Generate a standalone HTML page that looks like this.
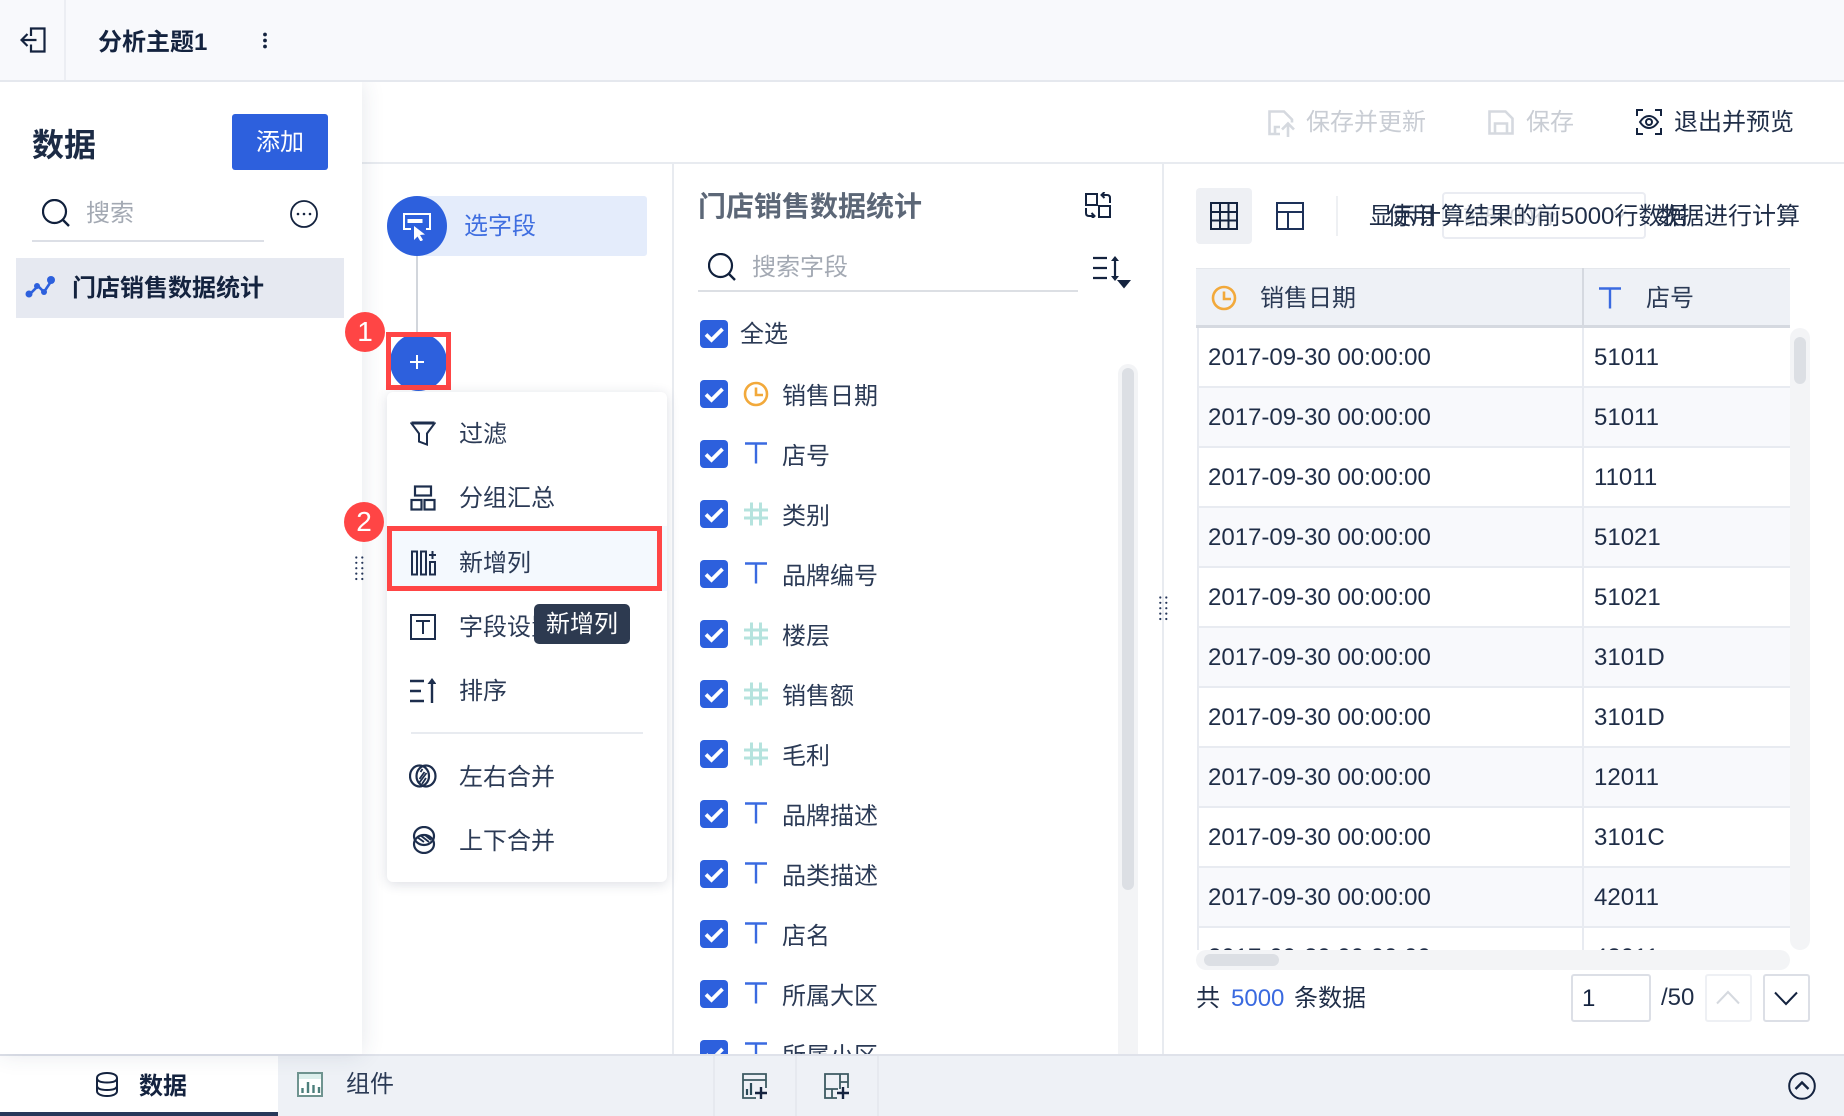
<!DOCTYPE html>
<html lang="zh"><head><meta charset="utf-8"><title>分析主题1</title>
<style>
html,body{margin:0;padding:0;width:1844px;height:1116px;overflow:hidden;background:#fff}
body{position:relative;font-family:"Liberation Sans","Noto Sans CJK SC",sans-serif;color:#1f2d47;font-size:24px}
div,span,svg{position:absolute;display:block}
.t{white-space:nowrap;line-height:32px;height:32px;font-size:24px;margin-top:1px}
.b{font-weight:700}
.g{color:#a3a9b3}
.m{color:#2b3a55}
.cb{left:700px;width:28px;height:28px}
.fi{left:742px;width:28px;height:28px}
.fl{left:782px;color:#2b3a55;margin-top:2px}
.row{left:1px;width:593px;height:58px;border-bottom:2px solid #e8ebf1;border-left:2px solid #e8ebf1;box-sizing:content-box}
.alt{background:#f8f9fc}
.c1{left:1208px;color:#1f2d47}
.c2{left:1594px;color:#1f2d47}
.mi{left:410px;width:26px;height:26px}
.ml{left:459px;color:#2b3a55;margin-top:2px}
.p2{margin-top:2px}
</style></head><body>
<svg width="0" height="0" style="position:absolute"><defs>
<symbol id="ck" viewBox="0 0 28 28"><rect width="28" height="28" rx="4" fill="#2d60dd"/><path d="M6 14.500l5.500 5.500L22.500 9" fill="none" stroke="#fff" stroke-width="3.800"/></symbol>
<symbol id="T" viewBox="0 0 28 28"><path d="M3 4.500h22M14 4.500v20" fill="none" stroke="#3a6ae0" stroke-width="2.400"/></symbol>
<symbol id="H" viewBox="0 0 28 28"><path d="M2 10h24M2 18h24M9.500 2.500v23M18.500 2.500v23" fill="none" stroke="#b5e3de" stroke-width="3"/></symbol>
<symbol id="C" viewBox="0 0 28 28"><circle cx="14" cy="14" r="11" fill="none" stroke="#f2a93b" stroke-width="2.600"/><path d="M14 7.500V15h7" fill="none" stroke="#f2a93b" stroke-width="2.600"/></symbol>
<symbol id="S" viewBox="0 0 28 28"><circle cx="12.500" cy="12.500" r="11.500" fill="none" stroke="#10203c" stroke-width="2.200"/><path d="M21 21l6 6" stroke="#10203c" stroke-width="2.400"/></symbol>
<symbol id="D" viewBox="0 0 9 25"><g fill="#26375a"><circle cx="1.300" cy="1.500" r="1.100"/><circle cx="7.300" cy="1.500" r="1.100"/><circle cx="1.300" cy="6.800" r="1.100"/><circle cx="7.300" cy="6.800" r="1.100"/><circle cx="1.300" cy="12.200" r="1.100"/><circle cx="7.300" cy="12.200" r="1.100"/><circle cx="1.300" cy="17.600" r="1.100"/><circle cx="7.300" cy="17.600" r="1.100"/><circle cx="1.300" cy="23" r="1.100"/><circle cx="7.300" cy="23" r="1.100"/></g></symbol>
</defs></svg>

<!-- top bar -->
<div style="left:0;top:0;width:1844px;height:80px;background:#f8f9fc"></div>
<div style="left:0;top:80px;width:1844px;height:2px;background:#e5e8ee"></div>
<div style="left:64px;top:0;width:2px;height:80px;background:#eceef3"></div>
<svg style="left:20px;top:27px" width="26" height="26" viewBox="0 0 26 26" fill="none" stroke="#14233f" stroke-width="2.200"><path d="M11 9V1.500h13.500v23H11v-7"/><path d="M1.500 13h15M7.500 7l-6 6 6 6"/></svg>
<div class="t b p2" style="left:98px;top:25px;color:#14233f">分析主题1</div>
<svg style="left:262px;top:32px" width="6" height="17" viewBox="0 0 6 17" fill="#14233f"><circle cx="3" cy="2.500" r="1.900"/><circle cx="3" cy="8.500" r="1.900"/><circle cx="3" cy="14.500" r="1.900"/></svg>

<!-- toolbar -->
<div style="left:362px;top:162px;width:1482px;height:2px;background:#e8ebf0"></div>
<svg style="left:1268px;top:110px" width="28" height="27" viewBox="0 0 28 27" fill="none" stroke="#d5d9df" stroke-width="2.600"><path d="M12 24H1.500V1.500H16l8 8v3"/><path d="M20 27V14M14 19.500l6-6 6 6M7 24v-7h5"/></svg>
<div class="t" style="left:1306px;top:106px;color:#c9cdd4">保存并更新</div>
<svg style="left:1488px;top:110px" width="26" height="25" viewBox="0 0 26 25" fill="none" stroke="#d5d9df" stroke-width="2.600"><path d="M1.500 23.500V1.500h16l7 7v15zM7 23.500v-10h12v10"/></svg>
<div class="t" style="left:1526px;top:106px;color:#c9cdd4">保存</div>
<svg style="left:1636px;top:109px" width="26" height="26" viewBox="0 0 26 26" fill="none" stroke="#14233f" stroke-width="2"><path d="M1 7V1h6M19 1h6v6M25 19v6h-6M7 25H1v-6"/><path d="M4 13c2.500-4 5.500-6 9-6s6.500 2 9 6c-2.500 4-5.500 6-9 6s-6.500-2-9-6z"/><circle cx="13" cy="13" r="3"/></svg>
<div class="t" style="left:1674px;top:106px;color:#1f2d47">退出并预览</div>

<!-- node column -->
<div style="left:416px;top:256px;width:2px;height:80px;background:#d2d6dc"></div>
<div style="left:417px;top:196px;width:230px;height:60px;background:#e4ecfb;border-radius:0 3px 3px 0"></div>
<div style="left:387px;top:196px;width:60px;height:60px;border-radius:50%;background:#2d60dd"></div>
<svg style="left:403px;top:213px" width="28" height="28" viewBox="0 0 28 28" fill="none"><path d="M8 16H1V1h26v15h-4" stroke="#fff" stroke-width="2"/><rect x="4.500" y="6" width="15" height="4" fill="#fff"/><path d="M11 13v14l3.500-3.500 3 5 2.500-1.500-3-5 5-.5z" fill="#fff"/></svg>
<div class="t" style="left:464px;top:210px;color:#3f6ee0">选字段</div>

<div style="left:390px;top:333px;width:57px;height:58px;border-radius:50%;background:#2d60dd"></div>
<div style="left:386px;top:332px;width:55px;height:48px;border:5px solid #ff4545"></div>
<svg style="left:408px;top:353px" width="18" height="18" viewBox="0 0 18 18"><path d="M9 2v14M2 9h14" stroke="#fff" stroke-width="2"/></svg>

<!-- vertical separators -->
<div style="left:672px;top:164px;width:2px;height:890px;background:#e8ebf0"></div>
<div style="left:1162px;top:164px;width:2px;height:890px;background:#e8ebf0"></div>
<svg style="left:1159px;top:596px" width="9" height="25"><use href="#D"/></svg>

<!-- field panel -->
<div class="t b" style="left:698px;top:190px;font-size:28px;color:#5c6777">门店销售数据统计</div>
<svg style="left:1085px;top:192px" width="26" height="26" viewBox="0 0 26 26" fill="none" stroke="#14233f" stroke-width="2"><rect x="1" y="2" width="11" height="11"/><rect x="14" y="14" width="11" height="11"/><path d="M25 11V6c0-2-1-3-3-3h-5M19.500 0l-3 3 3 3M1 16v5c0 2 1 3 3 3h5M6.500 21l3 3-3 3"/></svg>
<svg style="left:708px;top:253px" width="28" height="28"><use href="#S"/></svg>
<div class="t g" style="left:752px;top:251px">搜索字段</div>
<div style="left:698px;top:290px;width:380px;height:2px;background:#dcdfe4"></div>
<svg style="left:1093px;top:255px" width="38" height="34" viewBox="0 0 38 34" fill="none" stroke="#14233f" stroke-width="2.200"><path d="M0 3h14M0 13h14M0 23h14M22 4v18"/><path d="M22 1l-4 5h8zM22 26l-4-5h8z" fill="#14233f" stroke="none"/><path d="M24 25h14l-7 8.500z" fill="#14233f" stroke="none"/></svg>

<svg class="cb" style="top:320px"><use href="#ck"/></svg>
<div class="t fl" style="left:740px;top:318px;margin-top:1px">全选</div>

<svg class="cb" style="top:380px"><use href="#ck"/></svg><svg class="fi" style="top:380px"><use href="#C"/></svg><div class="t fl" style="top:379px">销售日期</div>
<svg class="cb" style="top:440px"><use href="#ck"/></svg><svg class="fi" style="top:439px"><use href="#T"/></svg><div class="t fl" style="top:439px">店号</div>
<svg class="cb" style="top:500px"><use href="#ck"/></svg><svg class="fi" style="top:500px"><use href="#H"/></svg><div class="t fl" style="top:499px">类别</div>
<svg class="cb" style="top:560px"><use href="#ck"/></svg><svg class="fi" style="top:559px"><use href="#T"/></svg><div class="t fl" style="top:559px">品牌编号</div>
<svg class="cb" style="top:620px"><use href="#ck"/></svg><svg class="fi" style="top:620px"><use href="#H"/></svg><div class="t fl" style="top:619px">楼层</div>
<svg class="cb" style="top:680px"><use href="#ck"/></svg><svg class="fi" style="top:680px"><use href="#H"/></svg><div class="t fl" style="top:679px">销售额</div>
<svg class="cb" style="top:740px"><use href="#ck"/></svg><svg class="fi" style="top:740px"><use href="#H"/></svg><div class="t fl" style="top:739px">毛利</div>
<svg class="cb" style="top:800px"><use href="#ck"/></svg><svg class="fi" style="top:799px"><use href="#T"/></svg><div class="t fl" style="top:799px">品牌描述</div>
<svg class="cb" style="top:860px"><use href="#ck"/></svg><svg class="fi" style="top:859px"><use href="#T"/></svg><div class="t fl" style="top:859px">品类描述</div>
<svg class="cb" style="top:920px"><use href="#ck"/></svg><svg class="fi" style="top:919px"><use href="#T"/></svg><div class="t fl" style="top:919px">店名</div>
<svg class="cb" style="top:980px"><use href="#ck"/></svg><svg class="fi" style="top:979px"><use href="#T"/></svg><div class="t fl" style="top:979px">所属大区</div>
<svg class="cb" style="top:1040px"><use href="#ck"/></svg><svg class="fi" style="top:1039px"><use href="#T"/></svg><div class="t fl" style="top:1039px">所属小区</div>

<div style="left:1118px;top:364px;width:20px;height:700px;background:#f3f4f6;border-radius:10px"></div>
<div style="left:1122px;top:368px;width:12px;height:522px;background:#dcdfe4;border-radius:6px"></div>

<!-- right panel top -->
<div style="left:1196px;top:188px;width:56px;height:56px;background:#eef0f4;border-radius:4px"></div>
<svg style="left:1210px;top:202px" width="28" height="28" viewBox="0 0 28 28" fill="none" stroke="#14233f" stroke-width="2"><rect x="1" y="1" width="26" height="26"/><path d="M1 10h26M1 18.500h26M10 1v26M18.500 1v26"/></svg>
<svg style="left:1276px;top:202px" width="28" height="28" viewBox="0 0 28 28" fill="none" stroke="#1d3159" stroke-width="2"><rect x="1" y="1" width="26" height="26"/><path d="M1 10h26M12 10v17"/></svg>
<div style="left:1336px;top:196px;width:2px;height:40px;background:#eef0f3"></div>

<div style="left:1442px;top:192px;width:200px;height:43px;border:2px solid #eaecf2;border-radius:4px"></div>
<div class="t" style="left:1463px;top:200px;color:#d3d6dc;font-size:22px">前5000行</div>
<svg style="left:1612px;top:209px" width="16" height="12" viewBox="0 0 16 12" fill="none" stroke="#d3d6dc" stroke-width="2"><path d="M2 2l6 7 6-7"/></svg>
<div class="t" style="left:1369px;top:200px;color:#1f2d47">显示计算结果的前5000行数据</div>
<div class="t" style="left:1387px;top:200px;color:#1f2d47">使用</div>
<div class="t" style="left:1656px;top:200px;color:#1f2d47">数据进行计算</div>

<!-- table -->
<div style="left:1196px;top:268px;width:594px;height:682px;overflow:hidden">
<div style="left:0;top:0;width:594px;height:56px;background:#eef1f6;border-bottom:3px solid #d5d9e0;border-top:1px solid #e4e7ec"></div>
<div class="row" style="top:60px"></div>
<div class="row alt" style="top:120px"></div>
<div class="row" style="top:180px"></div>
<div class="row alt" style="top:240px"></div>
<div class="row" style="top:300px"></div>
<div class="row alt" style="top:360px"></div>
<div class="row" style="top:420px"></div>
<div class="row alt" style="top:480px"></div>
<div class="row" style="top:540px"></div>
<div class="row alt" style="top:600px"></div>
<div class="row" style="top:660px"></div>
<div style="left:386px;top:0;width:2px;height:59px;background:#d5d9e0"></div>
<div style="left:386px;top:60px;width:2px;height:622px;background:#e8ebf1"></div>
</div>
<svg style="left:1210px;top:284px" width="28" height="28"><use href="#C"/></svg>
<div class="t" style="left:1260px;top:282px;color:#2b3a55">销售日期</div>
<svg style="left:1596px;top:284px" width="28" height="28"><use href="#T"/></svg>
<div class="t" style="left:1646px;top:282px;color:#2b3a55">店号</div>

<div class="t c1" style="top:341px">2017-09-30 00:00:00</div><div class="t c2" style="top:341px">51011</div>
<div class="t c1" style="top:401px">2017-09-30 00:00:00</div><div class="t c2" style="top:401px">51011</div>
<div class="t c1" style="top:461px">2017-09-30 00:00:00</div><div class="t c2" style="top:461px">11011</div>
<div class="t c1" style="top:521px">2017-09-30 00:00:00</div><div class="t c2" style="top:521px">51021</div>
<div class="t c1" style="top:581px">2017-09-30 00:00:00</div><div class="t c2" style="top:581px">51021</div>
<div class="t c1" style="top:641px">2017-09-30 00:00:00</div><div class="t c2" style="top:641px">3101D</div>
<div class="t c1" style="top:701px">2017-09-30 00:00:00</div><div class="t c2" style="top:701px">3101D</div>
<div class="t c1" style="top:761px">2017-09-30 00:00:00</div><div class="t c2" style="top:761px">12011</div>
<div class="t c1" style="top:821px">2017-09-30 00:00:00</div><div class="t c2" style="top:821px">3101C</div>
<div class="t c1" style="top:881px">2017-09-30 00:00:00</div><div class="t c2" style="top:881px">42011</div>
<div class="t c1" style="top:941px">2017-09-30 00:00:00</div><div class="t c2" style="top:941px">42011</div>

<!-- cover below clip -->
<div style="left:1190px;top:950px;width:610px;height:30px;background:#fff"></div>
<div style="left:1196px;top:950px;width:594px;height:20px;background:#f3f4f6;border-radius:10px"></div>
<div style="left:1204px;top:954px;width:75px;height:12px;background:#dcdfe4;border-radius:6px"></div>
<div style="left:1790px;top:328px;width:20px;height:622px;background:#f3f4f6;border-radius:10px"></div>
<div style="left:1794px;top:337px;width:12px;height:47px;background:#dcdfe4;border-radius:6px"></div>

<!-- pager -->
<div class="t p2" style="left:1196px;top:981px">共</div>
<div class="t p2" style="left:1231px;top:981px;color:#3a6ae0">5000</div>
<div class="t p2" style="left:1294px;top:981px">条数据</div>
<div style="left:1571px;top:974px;width:76px;height:44px;border:2px solid #dcdfe6;border-radius:3px"></div>
<div class="t" style="left:1582px;top:982px;color:#14233f">1</div>
<div class="t" style="left:1661px;top:981px">/50</div>
<div style="left:1705px;top:974px;width:43px;height:44px;border:2px solid #eef0f4;border-radius:3px"></div>
<svg style="left:1716px;top:990px" width="24" height="15" viewBox="0 0 24 15" fill="none" stroke="#d5d9df" stroke-width="2"><path d="M1 13.500L12 2l11 11.500"/></svg>
<div style="left:1763px;top:974px;width:43px;height:44px;border:2px solid #dcdfe6;border-radius:3px"></div>
<svg style="left:1774px;top:991px" width="24" height="15" viewBox="0 0 24 15" fill="none" stroke="#14233f" stroke-width="2"><path d="M1 1.500L12 13 23 1.500"/></svg>

<!-- menu -->
<div style="left:387px;top:392px;width:280px;height:490px;background:#fff;border-radius:6px;box-shadow:0 2px 12px rgba(30,45,80,.16)"></div>
<svg class="mi" style="top:420px" viewBox="0 0 26 26" fill="none" stroke="#1d2e4d" stroke-width="2"><path d="M1.500 3.500h23l-7.500 10v11l-8-3v-8z"/><path d="M1.500 3h23" stroke-width="3"/></svg>
<div class="t ml" style="top:417px">过滤</div>
<svg class="mi" style="top:485px" viewBox="0 0 26 26" fill="none" stroke="#1d2e4d" stroke-width="2.200"><rect x="5" y="1.500" width="16" height="9"/><rect x="1.500" y="15" width="10" height="9.500"/><rect x="14.500" y="15" width="10" height="9.500"/></svg>
<div class="t ml" style="top:481px">分组汇总</div>
<div style="left:387px;top:526px;width:280px;height:65px;background:#f4f9fe"></div>
<div style="left:387px;top:526px;width:265px;height:55px;border:5px solid #ff4545"></div>
<svg class="mi" style="top:550px" viewBox="0 0 26 26" fill="none" stroke="#1d2e4d" stroke-width="2"><rect x="2" y="1.500" width="5" height="23"/><rect x="11" y="1.500" width="5" height="23"/><rect x="20" y="12" width="5" height="12.500"/><path d="M22.500 1v8M19 5h7"/></svg>
<div class="t ml" style="top:546px">新增列</div>
<svg class="mi" style="top:614px" viewBox="0 0 26 26" fill="none" stroke="#1d2e4d" stroke-width="2"><rect x="1" y="1" width="24" height="24"/><path d="M6 7h14M13 7v13"/></svg>
<div class="t ml" style="top:610px">字段设置</div>
<div style="left:534px;top:604px;width:96px;height:40px;background:#2d3a50;border-radius:5px"></div>
<div class="t" style="left:546px;top:608px;color:#fff">新增列</div>
<svg class="mi" style="top:678px" viewBox="0 0 26 26" fill="none" stroke="#1d2e4d" stroke-width="2.400"><path d="M0 3h14M0 13h11M0 23h14M22 4v21"/><path d="M22 0l-4.500 6h9z" fill="#1d2e4d" stroke="none"/></svg>
<div class="t ml" style="top:674px">排序</div>
<div style="left:411px;top:732px;width:232px;height:2px;background:#e8ebf0"></div>
<svg style="left:409px;top:764px" width="28" height="24" viewBox="0 0 28 24" fill="none" stroke="#1d2e4d" stroke-width="2.200"><ellipse cx="10.500" cy="12" rx="9.500" ry="10.500"/><ellipse cx="17" cy="12" rx="9.500" ry="10.500"/><path d="M10.500 15l5-7M10 19l7.500-10M13 20l4-6M11.500 8l2-3" stroke-width="1.800"/></svg>
<div class="t ml" style="top:760px">左右合并</div>
<svg style="left:412px;top:826px" width="24" height="28" viewBox="0 0 24 28" fill="none" stroke="#1d2e4d" stroke-width="2.200"><ellipse cx="12" cy="10" rx="10" ry="9"/><ellipse cx="12" cy="18" rx="10" ry="9"/><path d="M5 11l7 5M8 9l9 7M13 9l6 5" stroke-width="1.800"/></svg>
<div class="t ml" style="top:824px">上下合并</div>

<!-- bottom bar -->
<div style="left:0;top:1054px;width:1844px;height:62px;background:#eef1f6;border-top:2px solid #dfe2ea;box-sizing:border-box"></div>
<div style="left:0;top:1056px;width:278px;height:60px;background:#fff"></div>
<div style="left:0;top:1112px;width:278px;height:4px;background:#27385a"></div>
<svg style="left:95px;top:1072px" width="24" height="25" viewBox="0 0 24 25" fill="none" stroke="#14233f" stroke-width="2"><path d="M2 6c0-3 4-5 10-5s10 2 10 5v13c0 3-4 5-10 5s-10-2-10-5z"/><path d="M2 6c0 3 4 4.500 10 4.500S22 9 22 6M2 13.500c0 3 4 4.500 10 4.500s10-1.500 10-4.500"/></svg>
<div class="t b p2" style="left:139px;top:1069px;color:#14233f">数据</div>
<svg style="left:297px;top:1072px" width="26" height="25" viewBox="0 0 26 25"><rect x="1" y="1" width="24" height="23" fill="#fff" stroke="#6f9490" stroke-width="2"/><rect x="2" y="2" width="22" height="5" fill="#dcefec"/><path d="M5.500 21v-5M11 21V10M16.500 21v-8M22 21v-6" stroke="#4d7f7c" stroke-width="2.400"/></svg>
<div class="t m p2" style="left:346px;top:1067px">组件</div>
<div style="left:713px;top:1056px;width:2px;height:60px;background:#e6e9ef"></div>
<div style="left:795px;top:1056px;width:2px;height:60px;background:#e6e9ef"></div>
<div style="left:877px;top:1056px;width:2px;height:60px;background:#e6e9ef"></div>
<svg style="left:741px;top:1073px" width="27" height="26" viewBox="0 0 27 26" fill="none" stroke="#3c5a62" stroke-width="1.800"><path d="M25 15V1H2v24h13M2 7h23"/><path d="M6 22v-6M10 22V10" stroke="#2a4a58" stroke-width="2.200"/><path d="M20 14v12M14 20h12" stroke="#14233f" stroke-width="2.400"/></svg>
<svg style="left:823px;top:1073px" width="26" height="26" viewBox="0 0 26 26" fill="none" stroke="#3c5a62" stroke-width="1.800"><path d="M25 15V1H2v24h12M17 1v15M17 9h8M2 16h13M9 16v9"/><path d="M20 14v12M14 20h12" stroke="#14233f" stroke-width="2.400"/></svg>
<svg style="left:1788px;top:1072px" width="28" height="28" viewBox="0 0 28 28" fill="none" stroke="#14233f" stroke-width="2"><circle cx="14" cy="14" r="12.800"/><path d="M7.500 17L14 10.500 20.500 17" stroke-width="2.400"/></svg>

<!-- left data panel -->
<div style="left:0;top:82px;width:362px;height:972px;background:#fff;box-shadow:0 0 22px rgba(40,55,90,.12);clip-path:inset(0 -40px -40px 0)"></div>
<div class="t b" style="left:32px;top:128px;font-size:32px;color:#1c2b45">数据</div>
<div style="left:232px;top:114px;width:96px;height:56px;background:#2d60dd;border-radius:3px"></div>
<div class="t" style="left:256px;top:126px;color:#fff">添加</div>
<svg style="left:42px;top:199px" width="28" height="28"><use href="#S"/></svg>
<div class="t g" style="left:86px;top:197px">搜索</div>
<div style="left:32px;top:240px;width:232px;height:2px;background:#dcdfe6"></div>
<svg style="left:290px;top:200px" width="28" height="28" viewBox="0 0 28 28" fill="none" stroke="#14233f" stroke-width="1.800"><circle cx="14" cy="14" r="13"/><circle cx="8" cy="14" r="1.300" fill="#14233f" stroke="none"/><circle cx="14" cy="14" r="1.300" fill="#14233f" stroke="none"/><circle cx="20" cy="14" r="1.300" fill="#14233f" stroke="none"/></svg>
<div style="left:16px;top:258px;width:328px;height:60px;background:#e6e9f1"></div>
<svg style="left:25px;top:275px" width="30" height="24" viewBox="0 0 30 24"><path d="M4 20l9-9 6 6 8-12" fill="none" stroke="#2d60dd" stroke-width="2.600"/><circle cx="4" cy="19" r="3.500" fill="#2d60dd"/><circle cx="12" cy="11" r="3" fill="#2d60dd"/><circle cx="19" cy="17" r="3" fill="#2d60dd"/><circle cx="26" cy="5" r="4" fill="#2d60dd"/></svg>
<div class="t b" style="left:72px;top:272px;color:#14233f">门店销售数据统计</div>

<!-- overlays above panel -->
<svg style="left:355px;top:556px" width="9" height="25"><use href="#D"/></svg>
<div style="left:345px;top:312px;width:40px;height:40px;border-radius:50%;background:#ff4545;color:#fff;font-size:28px;line-height:40px;text-align:center">1</div>
<div style="left:344px;top:502px;width:40px;height:40px;border-radius:50%;background:#ff4545;color:#fff;font-size:28px;line-height:40px;text-align:center">2</div>
</body></html>
